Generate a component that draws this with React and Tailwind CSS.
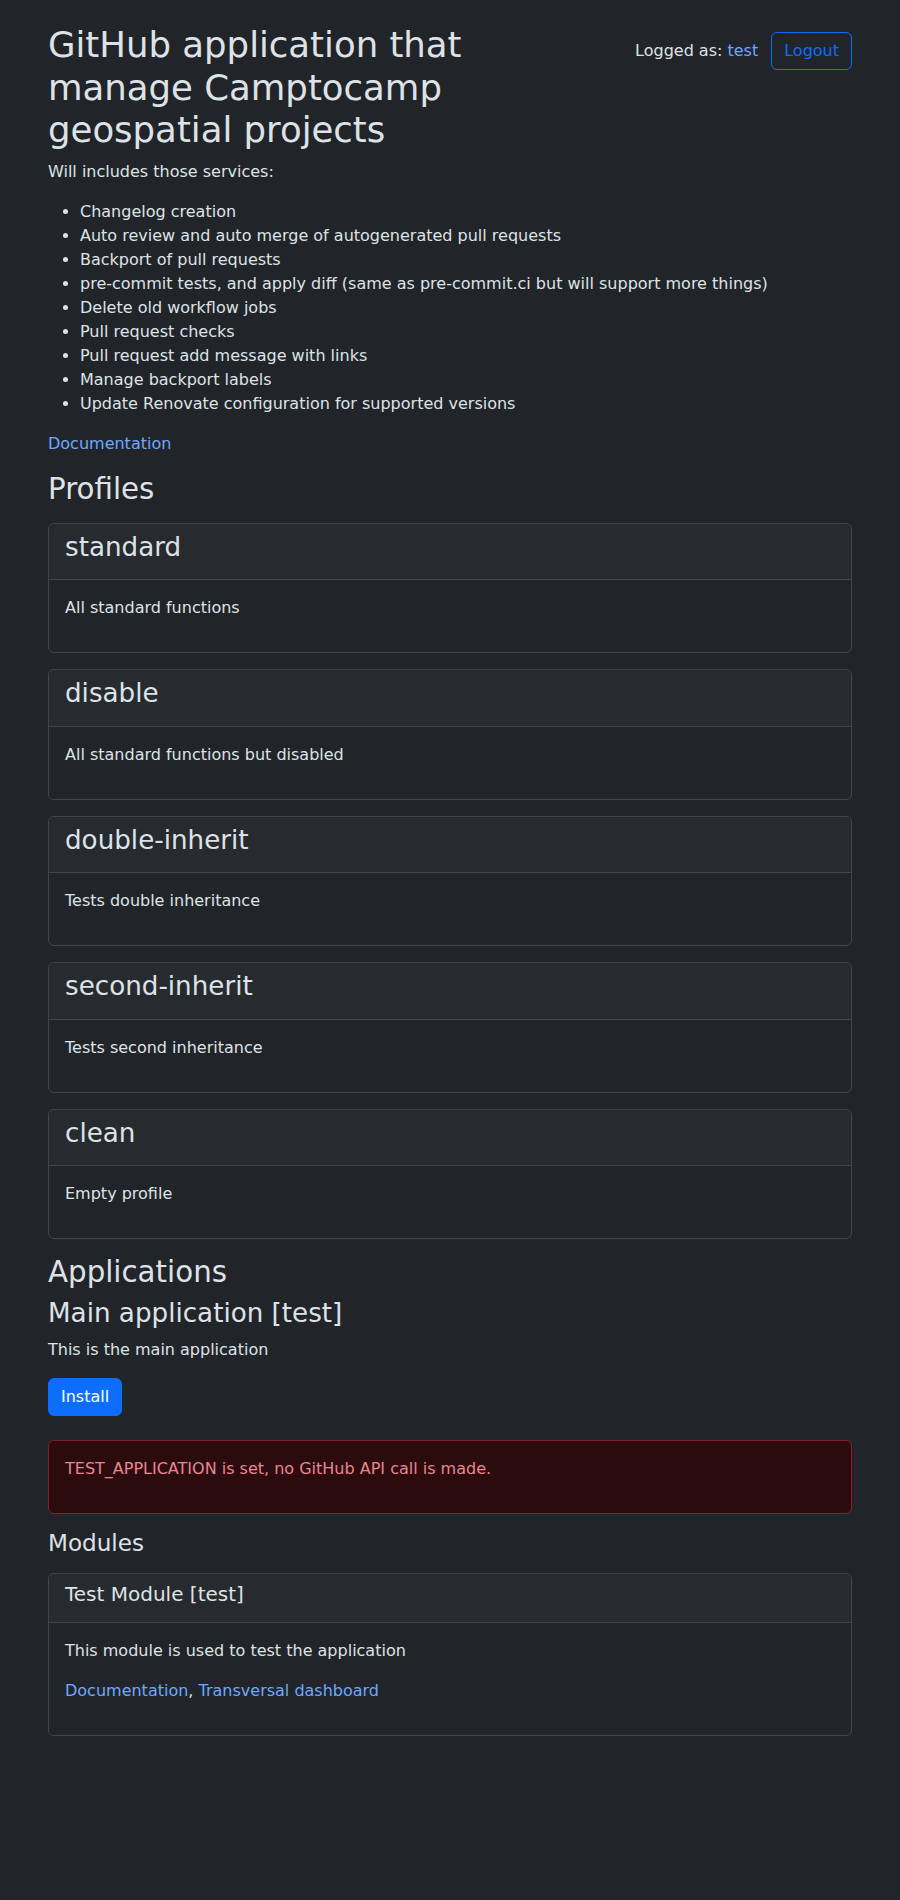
const services = [
  'Changelog creation',
  'Auto review and auto merge of autogenerated pull requests',
  'Backport of pull requests',
  'pre-commit tests, and apply diff (same as pre-commit.ci but will support more things)',
  'Delete old workflow jobs',
  'Pull request checks',
  'Pull request add message with links',
  'Manage backport labels',
  'Update Renovate configuration for supported versions',
];

const profiles = [
  { name: 'standard', description: 'All standard functions' },
  { name: 'disable', description: 'All standard functions but disabled' },
  { name: 'double-inherit', description: 'Tests double inheritance' },
  { name: 'second-inherit', description: 'Tests second inheritance' },
  { name: 'clean', description: 'Empty profile' },
];

function ProfileCard({ name, description }) {
  return (
    <div className="mb-4 rounded-md border border-[#424649]">
      <div className="rounded-t-md border-b border-[#424649] bg-[#272b2f] px-4 py-2">
        <h3 className="mb-2 text-[26.2px] leading-[1.2]">{name}</h3>
      </div>
      <div className="p-4">
        <p className="mb-4">{description}</p>
      </div>
    </div>
  );
}

export default function App() {
  return (
    <div className="min-h-screen bg-[#212529] font-['DejaVu_Sans',sans-serif] text-base leading-6 text-[#dee2e6]">
      <div className="px-12 pt-6 pb-10">
        <div className="flex items-start justify-between">
          <h1 className="mb-2 w-[470px] text-[35.5px] leading-[1.2]">
            GitHub application that manage Camptocamp geospatial projects
          </h1>
          <div className="flex items-center gap-[13px] pt-2">
            <span>
              Logged as: <a href="#" className="text-[#6ea8fe]">test</a>
            </span>
            <button className="rounded-md border border-[#0d6efd] px-3 py-1.5 leading-6 text-[#0d6efd]">
              Logout
            </button>
          </div>
        </div>

        <p className="mb-4">Will includes those services:</p>
        <ul className="mb-4 list-disc pl-8">
          {services.map((s) => (
            <li key={s}>{s}</li>
          ))}
        </ul>
        <p className="mb-4">
          <a href="#" className="text-[#6ea8fe]">Documentation</a>
        </p>

        <h2 className="mb-2 text-[29.3px] leading-[1.2]">Profiles</h2>
        <div className="mt-4">
          {profiles.map((p) => (
            <ProfileCard key={p.name} {...p} />
          ))}
        </div>

        <h2 className="mb-2 text-[29.3px] leading-[1.2]">Applications</h2>
        <h3 className="mb-2 text-[26.2px] leading-[1.2]">Main application [test]</h3>
        <p className="mb-4">This is the main application</p>
        <div className="mb-6">
          <button className="rounded-md border border-[#0d6efd] bg-[#0d6efd] px-3 py-1.5 leading-6 text-white">
            Install
          </button>
        </div>

        <div className="mb-4 rounded-md border border-[#842029] bg-[#2c0b0e] p-4 text-[#ea868f]">
          <p className="mb-4">TEST_APPLICATION is set, no GitHub API call is made.</p>
        </div>

        <h4 className="mb-2 text-[23.1px] leading-[1.2]">Modules</h4>
        <div className="mt-4 mb-4 rounded-md border border-[#424649]">
          <div className="rounded-t-md border-b border-[#424649] bg-[#272b2f] px-4 py-2">
            <h5 className="mb-2 text-[20px] leading-[1.2]">Test Module [test]</h5>
          </div>
          <div className="p-4">
            <p className="mb-4">This module is used to test the application</p>
            <p className="mb-4">
              <a href="#" className="text-[#6ea8fe]">Documentation</a>,{' '}
              <a href="#" className="text-[#6ea8fe]">Transversal dashboard</a>
            </p>
          </div>
        </div>
      </div>
    </div>
  );
}
